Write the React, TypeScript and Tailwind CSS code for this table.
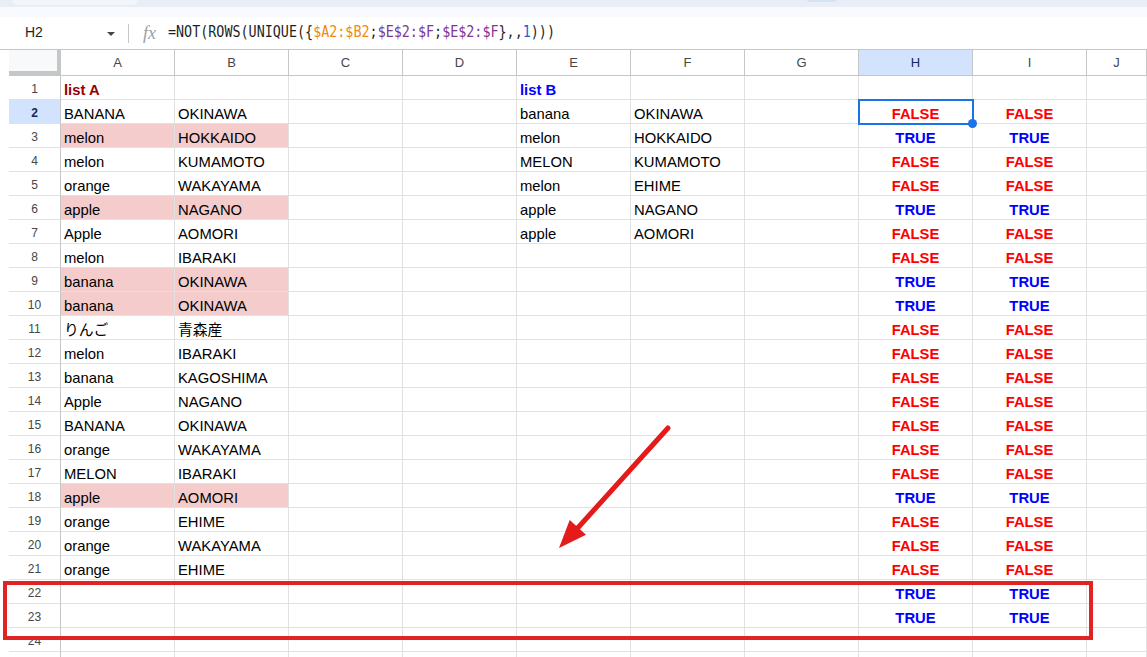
import React from "react";

const COLS = ["A", "B", "C", "D", "E", "F", "G", "H", "I", "J"];

const listA: [string, string][] = [
  ["BANANA", "OKINAWA"],
  ["melon", "HOKKAIDO"],
  ["melon", "KUMAMOTO"],
  ["orange", "WAKAYAMA"],
  ["apple", "NAGANO"],
  ["Apple", "AOMORI"],
  ["melon", "IBARAKI"],
  ["banana", "OKINAWA"],
  ["banana", "OKINAWA"],
  ["りんご", "青森産"],
  ["melon", "IBARAKI"],
  ["banana", "KAGOSHIMA"],
  ["Apple", "NAGANO"],
  ["BANANA", "OKINAWA"],
  ["orange", "WAKAYAMA"],
  ["MELON", "IBARAKI"],
  ["apple", "AOMORI"],
  ["orange", "EHIME"],
  ["orange", "WAKAYAMA"],
  ["orange", "EHIME"],
];

const listB: [string, string][] = [
  ["banana", "OKINAWA"],
  ["melon", "HOKKAIDO"],
  ["MELON", "KUMAMOTO"],
  ["melon", "EHIME"],
  ["apple", "NAGANO"],
  ["apple", "AOMORI"],
];

const pinkRows = [3, 6, 9, 10, 18];
// H/I results for rows 2..23
const flags = "FTFFTFFTTFFFFFFFTFFFTT";

const font = { fontFamily: '"Liberation Sans", Arial, "Noto Sans CJK JP", sans-serif' };

function cellContent(row: number, col: number) {
  if (row === 1 && col === 0)
    return <span className="font-bold text-[#990000]">list A</span>;
  if (row === 1 && col === 4)
    return <span className="font-bold text-[#0000ff]">list B</span>;
  if (row >= 2 && row <= 21 && col < 2) return <span>{listA[row - 2][col]}</span>;
  if (row >= 2 && row <= 7 && (col === 4 || col === 5))
    return <span>{listB[row - 2][col - 4]}</span>;
  if (row >= 2 && row <= 23 && (col === 7 || col === 8)) {
    const f = flags[row - 2] === "T";
    return (
      <span className={f ? "w-full text-center font-bold text-[#0000ff]" : "w-full text-center font-bold text-[#ff0000]"}>
        {f ? "TRUE" : "FALSE"}
      </span>
    );
  }
  return null;
}

function GridRow({ row }: { row: number }) {
  const pink = pinkRows.includes(row);
  return (
    <div className="flex h-[24px] shrink-0">
      <div className="w-[9px] shrink-0" />
      <div
        className={
          row === 2
            ? "flex w-[52px] shrink-0 items-center justify-center border-b border-r border-b-[#e1e1e1] border-r-[#c4c7c5] bg-[#d3e3fd] pt-[3px] text-[12px] font-bold text-[#0b2a5c]"
            : "flex w-[52px] shrink-0 items-center justify-center border-b border-r border-b-[#e1e1e1] border-r-[#c4c7c5] pt-[3px] text-[12px] text-[#444746]"
        }
      >
        {row}
      </div>
      {COLS.map((c, i) => (
        <div
          key={c}
          className={
            (i === 9 ? "w-[60px] " : "w-[114px] ") +
            (pink && i < 2 ? "bg-[#f4cccc] " : "") +
            "flex shrink-0 items-center overflow-hidden whitespace-nowrap border-b border-r border-[#e1e1e1] px-[3px] pt-[5px] text-[14.8px] text-black"
          }
        >
          {cellContent(row, i)}
        </div>
      ))}
    </div>
  );
}

export default function App() {
  const rows = Array.from({ length: 25 }, (_, i) => i + 1);
  return (
    <div className="relative h-[657px] w-[1147px] overflow-hidden bg-white" style={font}>
      {/* top chrome */}
      <div className="flex h-[7px] bg-[#e9eef6]">
        <div className="ml-[12px] h-[5px] w-[126px] rounded-b-[8px] bg-[#f2f5fa]" />
        <div className="ml-[669px] h-[2px] w-[30px] rounded-b-[4px] bg-[#d6e2f5]" />
      </div>
      <div className="h-[10px] bg-[#f8fafd]" />

      {/* formula bar */}
      <div className="flex h-[32px] items-center text-[14px] text-[#1f1f1f]">
        <span className="ml-[25px] w-[82px] pb-[1px]">H2</span>
        <svg width="8" height="4" viewBox="0 0 8 4" className="mt-[1px]">
          <path d="M0 0h8L4 4z" fill="#444746" />
        </svg>
        <div className="ml-[13px] h-[19px] w-px bg-[#c7c7c7]" />
        <span
          className="ml-[14px] w-[25px] text-[18px] italic text-[#9aa0a6]"
          style={{ fontFamily: '"Liberation Serif", serif' }}
        >
          fx
        </span>
        <span
          className="inline-block origin-left scale-y-[1.12] whitespace-pre text-[13.4px] text-[#1f1f1f]"
          style={{ fontFamily: '"DejaVu Sans Mono", "Liberation Mono", monospace' }}
        >
          {"=NOT(ROWS(UNIQUE({"}
          <span className="text-[#ef8a12]">{"$A2:$B2"}</span>
          {";"}
          <span className="text-[#7e3794]">{"$E$2:$F"}</span>
          {";"}
          <span className="text-[#7e3794]">{"$E$2:$F"}</span>
          {"},,"}
          <span className="text-[#1a5fd6]">1</span>
          {")))"}
        </span>
      </div>

      {/* column headers */}
      <div className="flex h-[27px] border-t border-[#c4c7c5]">
        <div className="w-[9px] shrink-0" />
        <div className="w-[52px] shrink-0 border-b-[5px] border-r-[4px] border-[#c4c7c5] bg-[#f8f9fa]" />
        {COLS.map((c, i) => (
          <div
            key={c}
            className={
              (i === 9 ? "w-[60px] " : "w-[114px] ") +
              (i === 7 ? "bg-[#d3e3fd] text-[#0b2a5c] " : "text-[#444746] ") +
              "flex shrink-0 items-center justify-center border-b border-r border-[#c4c7c5] pt-[1px] text-[13px]"
            }
          >
            {c}
          </div>
        ))}
      </div>

      {/* grid */}
      <div className="flex flex-col">
        {rows.map((r) => (
          <GridRow key={r} row={r} />
        ))}
      </div>

      {/* selection of H2 */}
      <div className="absolute left-[858px] top-[99px] h-[26px] w-[116px] border-2 border-[#1a73e8]" />
      <div className="absolute left-[968px] top-[119px] h-[9px] w-[9px] rounded-full bg-[#1a73e8]" />

      {/* annotations */}
      <div className="absolute left-[3px] top-[581px] h-[59px] w-[1090px] border-[4px] border-[#e02424]" />
      <svg className="pointer-events-none absolute left-0 top-0" width="1147" height="657">
        <line x1="668" y1="428" x2="575" y2="531" stroke="#e31b1b" strokeWidth="5" strokeLinecap="round" />
        <polygon points="559,548 569.7,519.9 586,534.7" fill="#e31b1b" />
      </svg>
    </div>
  );
}
